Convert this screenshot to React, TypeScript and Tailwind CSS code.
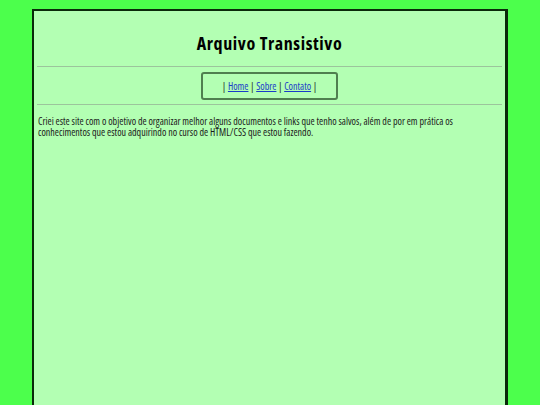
export default function App() {
  return (
    <div className="h-[405px] overflow-hidden bg-[#4cff4c] px-[32px] pt-[9px]">
      <div className="h-[500px] border-2 border-r-[3px] border-[#0a2a0a] bg-[#b3ffb3] px-[3px] font-['Open_Sans',sans-serif] font-stretch-condensed text-[#1a1a1a]">
        <h1 className="mt-[20px] text-center text-[18px] font-bold leading-[24px] tracking-[0.6px] text-black">
          Arquivo Transistivo
        </h1>
        <hr className="mt-[11px] border-t border-[#9cc49c]" />
        <div className="mt-[5px] flex justify-center">
          <nav className="flex h-[28px] w-[137px] items-center justify-center rounded-[3px] border-2 border-[#4f7f4f] text-[10px]">
            |&nbsp;<a href="#" className="text-[#1a3cc8] underline">Home</a>&nbsp;|&nbsp;
            <a href="#" className="text-[#1a3cc8] underline">Sobre</a>&nbsp;|&nbsp;
            <a href="#" className="text-[#1a3cc8] underline">Contato</a>&nbsp;|
          </nav>
        </div>
        <hr className="mt-[4px] border-t border-[#9cc49c]" />
        <p className="mt-[11px] px-[1px] text-[10px] leading-[11px]">
          Criei este site com o objetivo de organizar melhor alguns documentos e links que tenho salvos, além de por em prática os
          conhecimentos que estou adquirindo no curso de HTML/CSS que estou fazendo.
        </p>
      </div>
    </div>
  );
}
